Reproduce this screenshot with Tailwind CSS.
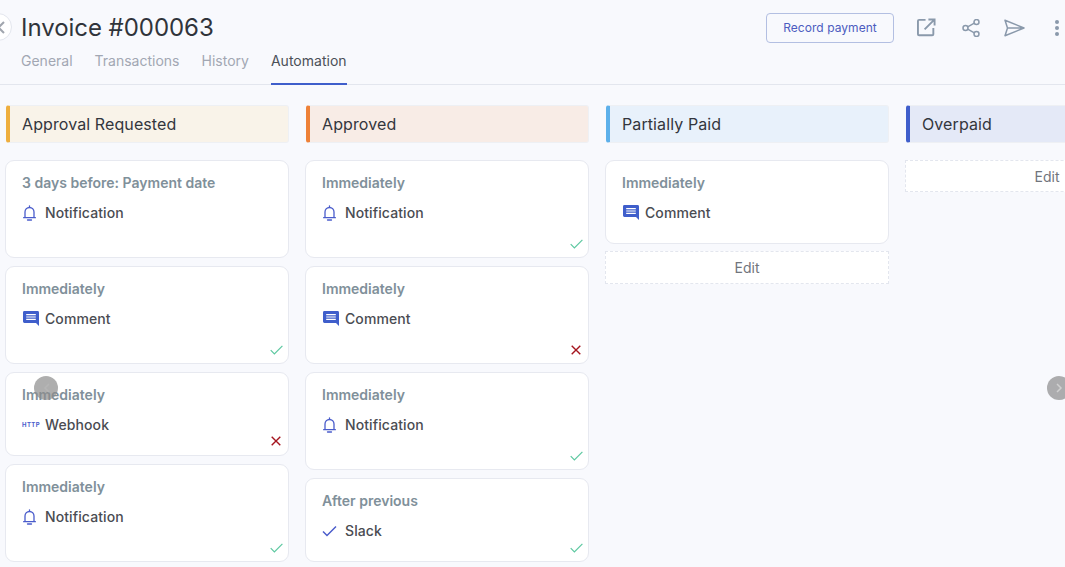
<!DOCTYPE html>
<html lang="en">
<head>
<meta charset="UTF-8">
<title>Invoice #000063</title>
<script src="https://cdn.jsdelivr.net/npm/@tailwindcss/browser@4"></script>
</head>
<body class="relative w-[1065px] h-[567px] overflow-hidden bg-[#f8f9fd] font-['Inter',sans-serif] text-[#33363d]">
  <svg class="hidden">
    <symbol id="bell" viewBox="0 0 13 16"><path d="M2 12.500V7a4.500 4.500 0 0 1 9 0v5.500M.6 12.700h11.800M6.500 2.500V.8M4.500 15h4" fill="none" stroke="currentColor" stroke-width="1.300" stroke-linecap="round" stroke-linejoin="round"/></symbol>
    <symbol id="comment" viewBox="0 0 16 15"><path d="M1.400 0h13.200A1.400 1.400 0 0 1 16 1.400V15l-3-3H1.400A1.400 1.400 0 0 1 0 10.600V1.400A1.400 1.400 0 0 1 1.400 0z" fill="currentColor"/><path d="M3.200 3.600h9.600M3.200 6h9.600M3.200 8.400h9.600" stroke="#fff" stroke-width="1.200"/></symbol>
    <symbol id="ok" viewBox="0 0 13 10"><path d="M.7 5.200 4.400 9 12.400.8" fill="none" stroke="#5cc8a0" stroke-width="1.200"/></symbol>
    <symbol id="fail" viewBox="0 0 10 10"><path d="M.7.7l8.600 8.600M9.300.7.700 9.300" fill="none" stroke="#a5151f" stroke-width="1.400"/></symbol>
  </svg>

  <!-- header -->
  <header class="h-[85px] border-b border-[#e3e6ee] pl-[21px] pr-[3px]">
    <div class="flex items-center h-[55px]">
      <h1 class="text-[24px] leading-8 font-normal text-[#30343b] tracking-[-0.05px]">Invoice #000063</h1>
      <div class="ml-auto flex items-center">
        <button class="h-[30px] w-[128px] rounded border border-[#b3bfe2] text-[12px] text-[#4c5cc0] tracking-[0.05px]">Record payment</button>
        <svg class="ml-[23px] w-[19px] h-[19px] text-[#8a99ab]" viewBox="0 0 20 20" fill="none" stroke="currentColor" stroke-width="2"><path d="M9 2H2.200A1.200 1.200 0 0 0 1 3.200V17a1.200 1.200 0 0 0 1.200 1.200H16A1.200 1.200 0 0 0 17.200 17v-6.500M8 12 18 2M12 1.500h6.500V8"/></svg>
        <svg class="ml-[26px] w-[18px] h-[18px] text-[#8a99ab]" viewBox="0 0 18 18" fill="none" stroke="currentColor" stroke-width="1.500"><circle cx="3.500" cy="9" r="2.500"/><circle cx="14.500" cy="3" r="2.500"/><circle cx="14.500" cy="15" r="2.500"/><path d="M5.700 7.800 12.300 4.200M5.700 10.200l6.600 3.600"/></svg>
        <svg class="ml-[24px] w-[21px] h-[18px] text-[#8a99ab]" viewBox="0 0 21 18" fill="none" stroke="currentColor" stroke-width="1.500" stroke-linejoin="round"><path d="M1 1.200 20 9 1 16.800 3.500 9zM3.500 9H20"/></svg>
        <div class="ml-[30px] mr-[3px] w-[4px] flex flex-col gap-[2px]">
          <span class="w-[4px] h-[4px] rounded-full bg-[#8a99ab]"></span>
          <span class="w-[4px] h-[4px] rounded-full bg-[#8a99ab]"></span>
          <span class="w-[4px] h-[4px] rounded-full bg-[#8a99ab]"></span>
        </div>
      </div>
    </div>
    <nav class="flex gap-[22px] text-[14px] text-[#a2a7b3]">
      <a class="h-[30px] leading-[12px]">General</a>
      <a class="h-[30px] leading-[12px]">Transactions</a>
      <a class="h-[30px] leading-[12px]">History</a>
      <a class="h-[30px] w-[76px] leading-[12px] tracking-[0.02px] text-[#4b5058] border-b-2 border-[#3f5ecb]">Automation</a>
    </nav>
  </header>

  <!-- back button -->
  <button class="absolute left-[-16px] top-[13px] w-[28px] h-[28px] rounded-full bg-white border border-[#e3e6ee] flex items-center justify-end pr-[6px]">
    <svg class="w-[13px] h-[13px] text-[#a0a5ae]" viewBox="0 0 13 13" fill="none" stroke="currentColor" stroke-width="2"><path d="M12 1 1 12M1 1l11 11"/></svg>
  </button>

  <!-- board -->
  <main class="flex gap-4 pl-[5px] pt-[20px]">
    <section class="w-[284px] shrink-0 flex flex-col gap-2">
      <div class="h-[38px] ml-px mb-[9px] flex items-center pl-[12px] border-l-[4px] border-l-[#eeae3e] border border-[#eef0f4] rounded-[3px] bg-[#f9f3e9] text-[16px] tracking-[0.1px]">Approval Requested</div>
      <article class="relative h-[98px] rounded-[9px] bg-white border border-[#e7e9f0] pl-[16px]">
        <p class="mt-[15px] text-[14px] leading-[14px] font-semibold text-[#80909a] h-[14px]">3 days before: Payment date</p>
        <div class="mt-[12px] flex items-center gap-[8px] text-[14px] font-medium tracking-[0.1px] text-[#4a4c52]"><span class="w-[15px] flex justify-center"><svg class="w-[13px] h-[16px] text-[#4a5ccb]"><use href="#bell"/></svg></span>Notification</div>
      </article>
      <article class="relative h-[98px] rounded-[9px] bg-white border border-[#e7e9f0] pl-[16px]">
        <p class="mt-[15px] text-[14px] leading-[14px] font-semibold text-[#80909a] h-[14px]">Immediately</p>
        <div class="mt-[12px] flex items-center gap-[6px] text-[14px] font-medium tracking-[0.1px] text-[#4a4c52]"><svg class="ml-px w-[16px] h-[15px] text-[#3f5ecb]"><use href="#comment"/></svg>Comment</div>
        <svg class="absolute right-[5px] bottom-[8px] w-[13px] h-[10px]"><use href="#ok"/></svg>
      </article>
      <article class="relative h-[84px] rounded-[9px] bg-white border border-[#e7e9f0] pl-[16px]">
        <p class="mt-[15px] text-[14px] leading-[14px] font-semibold text-[#80909a] h-[14px]">Immediately</p>
        <div class="mt-[12px] flex items-center gap-[5px] text-[14px] font-medium tracking-[0.1px] text-[#4a4c52]"><span class="w-[18px] text-[6px] font-bold tracking-[0.4px] text-[#4a5ccb]">HTTP</span>Webhook</div>
        <svg class="absolute right-[7px] bottom-[9px] w-[10px] h-[10px]"><use href="#fail"/></svg>
      </article>
      <article class="relative h-[98px] rounded-[9px] bg-white border border-[#e7e9f0] pl-[16px]">
        <p class="mt-[15px] text-[14px] leading-[14px] font-semibold text-[#80909a] h-[14px]">Immediately</p>
        <div class="mt-[12px] flex items-center gap-[8px] text-[14px] font-medium tracking-[0.1px] text-[#4a4c52]"><span class="w-[15px] flex justify-center"><svg class="w-[13px] h-[16px] text-[#4a5ccb]"><use href="#bell"/></svg></span>Notification</div>
        <svg class="absolute right-[5px] bottom-[8px] w-[13px] h-[10px]"><use href="#ok"/></svg>
      </article>
    </section>

    <section class="w-[284px] shrink-0 flex flex-col gap-2">
      <div class="h-[38px] ml-px mb-[9px] flex items-center pl-[12px] border-l-[4px] border-l-[#ee8138] border border-[#eef0f4] rounded-[3px] bg-[#f8ece6] text-[16px] tracking-[0.1px]">Approved</div>
      <article class="relative h-[98px] rounded-[9px] bg-white border border-[#e7e9f0] pl-[16px]">
        <p class="mt-[15px] text-[14px] leading-[14px] font-semibold text-[#80909a] h-[14px]">Immediately</p>
        <div class="mt-[12px] flex items-center gap-[8px] text-[14px] font-medium tracking-[0.1px] text-[#4a4c52]"><span class="w-[15px] flex justify-center"><svg class="w-[13px] h-[16px] text-[#4a5ccb]"><use href="#bell"/></svg></span>Notification</div>
        <svg class="absolute right-[5px] bottom-[8px] w-[13px] h-[10px]"><use href="#ok"/></svg>
      </article>
      <article class="relative h-[98px] rounded-[9px] bg-white border border-[#e7e9f0] pl-[16px]">
        <p class="mt-[15px] text-[14px] leading-[14px] font-semibold text-[#80909a] h-[14px]">Immediately</p>
        <div class="mt-[12px] flex items-center gap-[6px] text-[14px] font-medium tracking-[0.1px] text-[#4a4c52]"><svg class="ml-px w-[16px] h-[15px] text-[#3f5ecb]"><use href="#comment"/></svg>Comment</div>
        <svg class="absolute right-[7px] bottom-[8px] w-[10px] h-[10px]"><use href="#fail"/></svg>
      </article>
      <article class="relative h-[98px] rounded-[9px] bg-white border border-[#e7e9f0] pl-[16px]">
        <p class="mt-[15px] text-[14px] leading-[14px] font-semibold text-[#80909a] h-[14px]">Immediately</p>
        <div class="mt-[12px] flex items-center gap-[8px] text-[14px] font-medium tracking-[0.1px] text-[#4a4c52]"><span class="w-[15px] flex justify-center"><svg class="w-[13px] h-[16px] text-[#4a5ccb]"><use href="#bell"/></svg></span>Notification</div>
        <svg class="absolute right-[5px] bottom-[8px] w-[13px] h-[10px]"><use href="#ok"/></svg>
      </article>
      <article class="relative h-[84px] rounded-[9px] bg-white border border-[#e7e9f0] pl-[16px]">
        <p class="mt-[15px] text-[14px] leading-[14px] font-semibold text-[#80909a] h-[14px]">After previous</p>
        <div class="mt-[12px] flex items-center gap-[8px] text-[14px] font-medium tracking-[0.1px] text-[#4a4c52]"><svg class="w-[15px] h-[12px] text-[#4a5ccb]" viewBox="0 0 15 12" fill="none" stroke="currentColor" stroke-width="1.500"><path d="M1 6.500 5 10.500 14 1.500"/></svg>Slack</div>
        <svg class="absolute right-[5px] bottom-[8px] w-[13px] h-[10px]"><use href="#ok"/></svg>
      </article>
    </section>

    <section class="w-[284px] shrink-0 flex flex-col gap-2">
      <div class="h-[38px] ml-px mb-[9px] flex items-center pl-[12px] border-l-[4px] border-l-[#5db0ea] border border-[#eef0f4] rounded-[3px] bg-[#e8f1fb] text-[16px] tracking-[0.1px]">Partially Paid</div>
      <article class="relative h-[84px] rounded-[9px] bg-white border border-[#e7e9f0] pl-[16px]">
        <p class="mt-[15px] text-[14px] leading-[14px] font-semibold text-[#80909a] h-[14px]">Immediately</p>
        <div class="mt-[12px] flex items-center gap-[6px] text-[14px] font-medium tracking-[0.1px] text-[#4a4c52]"><svg class="ml-px w-[16px] h-[15px] text-[#3f5ecb]"><use href="#comment"/></svg>Comment</div>
      </article>
      <div class="h-[33px] -mt-px flex items-center justify-center bg-white border border-dashed border-[#e3e6ee] text-[14px] text-[#71757c]">Edit</div>
    </section>

    <section class="w-[284px] shrink-0 flex flex-col gap-2">
      <div class="h-[38px] ml-px mb-[9px] flex items-center pl-[12px] border-l-[4px] border-l-[#3f5ecb] border border-[#eef0f4] rounded-[3px] bg-[#e4e9f7] text-[16px] tracking-[0.1px]">Overpaid</div>
      <div class="h-[32px] flex items-center justify-center bg-white border border-dashed border-[#e3e6ee] text-[14px] text-[#71757c]">Edit</div>
    </section>
  </main>

  <!-- carousel arrows -->
  <button class="absolute left-[34px] top-[376px] w-[24px] h-[24px] rounded-full bg-[#8c8c8c]/70 flex items-center justify-center">
    <svg class="w-[7px] h-[10px] text-[#b5b5b5]" viewBox="0 0 7 10" fill="none" stroke="currentColor" stroke-width="1.500"><path d="M6 1 2 5l4 4"/></svg>
  </button>
  <button class="absolute left-[1047px] top-[376px] w-[24px] h-[24px] rounded-full bg-[#8c8c8c]/70 flex items-center justify-center">
    <svg class="w-[7px] h-[10px] text-[#d0d0d0]" viewBox="0 0 7 10" fill="none" stroke="currentColor" stroke-width="1.500"><path d="M1 1l4 4-4 4"/></svg>
  </button>
</body>
</html>
